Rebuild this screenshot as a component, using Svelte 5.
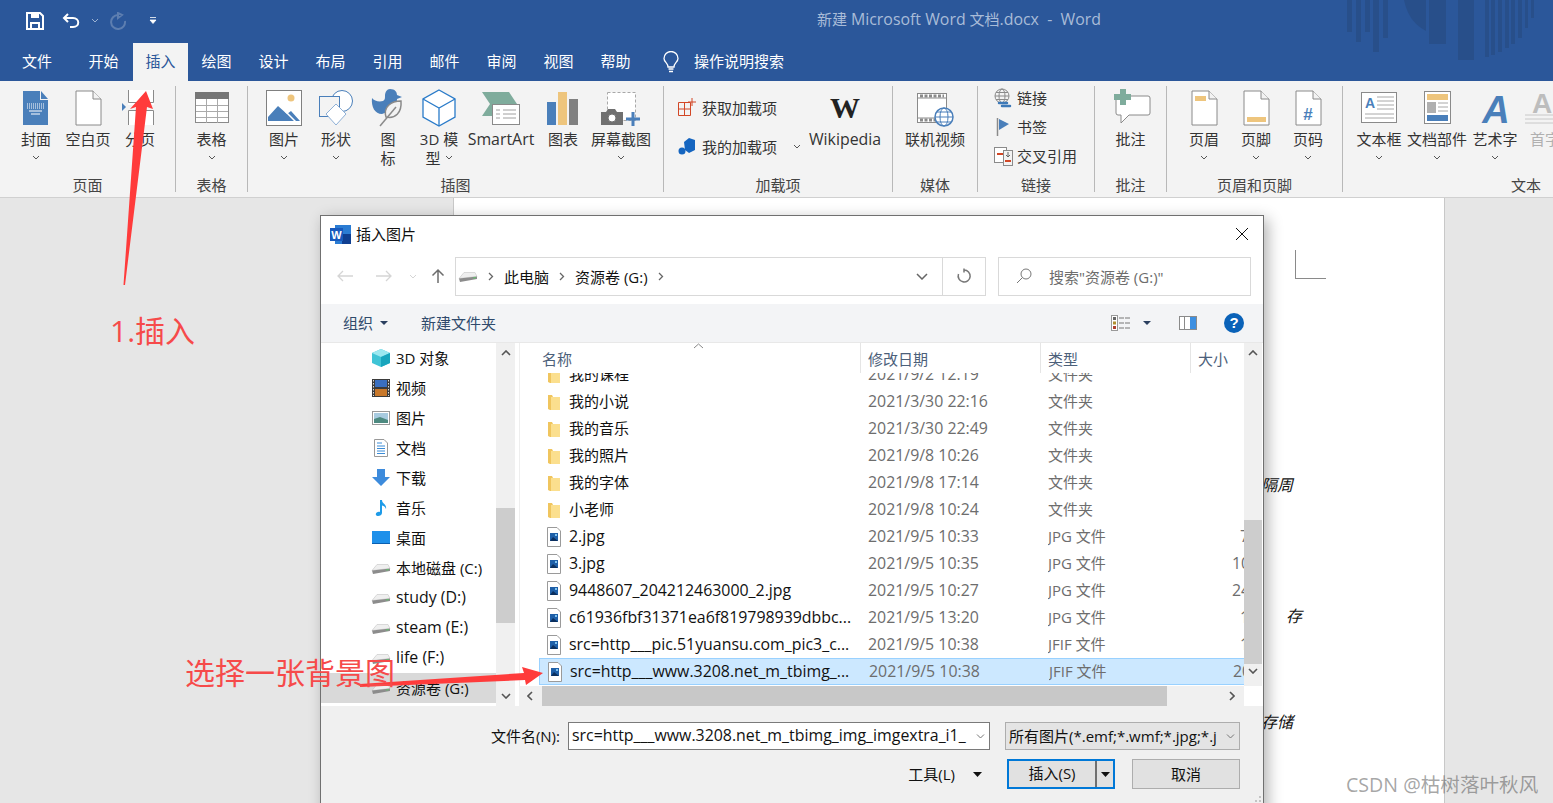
<script>
  const tabs = ['绘图', '设计', '布局', '引用', '邮件', '审阅', '视图', '帮助'];

  const tree = [
    { icon: 'cube', label: '3D 对象' },
    { icon: 'film', label: '视频' },
    { icon: 'pic', label: '图片' },
    { icon: 'txt', label: '文档' },
    { icon: 'down', label: '下载' },
    { icon: 'note', label: '音乐' },
    { icon: 'desk', label: '桌面' },
    { icon: 'drive', label: '本地磁盘 (C:)' },
    { icon: 'drive', label: 'study (D:)' },
    { icon: 'drive', label: 'steam (E:)' },
    { icon: 'drive', label: 'life (F:)' },
    { icon: 'drive', label: '资源卷 (G:)', selected: true }
  ];

  const files = [
    { name: '我的课程', date: '2021/9/2 12:19', type: '文件夹', folder: true },
    { name: '我的小说', date: '2021/3/30 22:16', type: '文件夹', folder: true },
    { name: '我的音乐', date: '2021/3/30 22:49', type: '文件夹', folder: true },
    { name: '我的照片', date: '2021/9/8 10:26', type: '文件夹', folder: true },
    { name: '我的字体', date: '2021/9/8 17:14', type: '文件夹', folder: true },
    { name: '小老师', date: '2021/9/8 10:24', type: '文件夹', folder: true },
    { name: '2.jpg', date: '2021/9/5 10:33', type: 'JPG 文件', size: '7', narrow: true },
    { name: '3.jpg', date: '2021/9/5 10:35', type: 'JPG 文件', size: '10' },
    { name: '9448607_204212463000_2.jpg', date: '2021/9/5 10:27', type: 'JPG 文件', size: '24' },
    { name: 'c61936fbf31371ea6f819798939dbbc...', date: '2021/9/5 13:20', type: 'JPG 文件', size: '1', narrow: true },
    { name: 'src=http___pic.51yuansu.com_pic3_c...', date: '2021/9/5 10:38', type: 'JFIF 文件', size: '1', narrow: true },
    { name: 'src=http___www.3208.net_m_tbimg_...', date: '2021/9/5 10:38', type: 'JFIF 文件', size: '20', selected: true }
  ];

  const stripes = [
    [314, 5, 32], [323, 5, 42], [332, 5, 32], [340, 6, 52], [350, 5, 38],
    [396, 17, 44], [425, 16, 60], [452, 4, 57], [458, 4, 55], [465, 4, 52],
    [472, 4, 48], [478, 4, 44], [485, 4, 38], [492, 3, 28], [498, 3, 18]
  ];

  // latin runs look a bit larger than the cjk ones in the reference
  const isLatin = (text) => /^[\x00-\x7f]+$/.test(text);
</script>

{#snippet chev()}
  <svg class="chev" width="8" height="5" viewBox="0 0 8 5"><path d="M1 1l3 3 3-3" fill="none" stroke="#555" /></svg>
{/snippet}

{#snippet pageDoc()}
  <path d="M10 3H27L35 11V37H10Z" fill="#fff" stroke="#8a8a8a" />
  <path d="M27 3V11H35" fill="#f3f3f3" stroke="#8a8a8a" />
{/snippet}

{#snippet ribbonIcon(name)}
  <svg width="44" height="40" viewBox="0 0 44 40">
    {#if name === 'cover'}
      <path d="M9 3H26V12H34V37H9Z" fill="#4a7fba" />
      <path d="M27 3L34 11H27Z" fill="#4a7fba" />
      <path d="M13 16H30M13 18H30M13 20H30" stroke="#fff" stroke-dasharray="1 1" />
      <path d="M15 23H28M17 26H26" stroke="#fff" />
    {:else if name === 'blank' || name === 'header' || name === 'footer' || name === 'pageno'}
      {@render pageDoc()}
      {#if name === 'header'}
        <rect x="13" y="8" width="11" height="5" fill="#eec57d" />
      {:else if name === 'footer'}
        <rect x="13" y="29" width="19" height="5" fill="#eec57d" />
      {:else if name === 'pageno'}
        <text x="22" y="32" text-anchor="middle" class="hash">#</text>
      {/if}
    {:else if name === 'break'}
      <rect x="10" y="2" width="26" height="15" fill="#fff" />
      <rect x="10" y="22" width="26" height="15" fill="#fff" />
      <path d="M10.500 2V14.500H35.500V2M10.500 37V22.500H35.500V37" fill="none" stroke="#8a8a8a" />
      <path d="M4 15l4 4-4 4Z" fill="#4a7fba" />
    {:else if name === 'table'}
      <rect x="5.500" y="4.500" width="33" height="30" fill="#fff" stroke="#8a8a8a" />
      <rect x="5" y="4" width="34" height="7" fill="#767676" />
      <path d="M16.500 11V35M27.500 11V35M6 17.500H38M6 23.500H38M6 29.500H38" stroke="#aaa" />
    {:else if name === 'picture'}
      <rect x="4.500" y="2.500" width="35" height="35" fill="#fff" stroke="#808080" />
      <circle cx="29" cy="10" r="3.500" fill="#eec57d" />
      <path d="M6 33V29L16 18L25 26L29 23L38 33Z" fill="#4a7fba" />
      <path d="M23 23L34 34" stroke="#fff" stroke-width="1.500" />
    {:else if name === 'shapes'}
      <circle cx="28" cy="13" r="10.500" fill="#fff" stroke="#4a7fba" />
      <rect x="5.500" y="8.500" width="20" height="20" fill="#f3f3f3" stroke="#4a7fba" />
      <path d="M22 16L32 26L22 37L12 26Z" fill="#fff" stroke="#8fb0d6" />
    {:else if name === 'icons'}
      <path d="M24 1c5 0 7 3 7 6l5 2-5 2c0 5-2 9-7 12l-8 3c-7 0-11-7-10-16 2 3 7 4 11 3 2-1 2-3 2-5 0-4 2-7 5-7Z" fill="#4a7fba" />
      <path d="M35 13C25 13 17 19 20 29 29 31 36 25 35 13Z" fill="#f3f3f3" stroke="#8a8a8a" stroke-width="1.500" />
      <path d="M14 38L30 19" stroke="#8a8a8a" stroke-width="1.500" />
    {:else if name === 'model'}
      <path d="M22 2L38 11V29L22 38L6 29V11Z" fill="#fff" stroke="#2a7bc9" stroke-width="1.300" />
      <path d="M6 11L22 20L38 11M22 20V38" fill="none" stroke="#2a7bc9" stroke-width="1.300" />
    {:else if name === 'smartart'}
      <path d="M3 4H30L38 16L30 28H3L11 16Z" fill="#7fac9c" />
      <rect x="13.500" y="16.500" width="27" height="20" fill="#fff" stroke="#8a8a8a" />
      <path d="M24 22H37M24 26H37M24 30H37M17 22H21M17 26H21M17 30H21" stroke="#a0a0a0" />
    {:else if name === 'chart'}
      <rect x="6" y="14" width="9" height="23" fill="#4a7fba" />
      <rect x="17" y="4" width="9" height="33" fill="#eec57d" />
      <rect x="28" y="11" width="9" height="26" fill="#808080" />
    {:else if name === 'shot'}
      <rect x="8.500" y="4.500" width="28" height="28" fill="#fff" stroke="#a8a8a8" stroke-dasharray="3 2" />
      <path d="M2 24H7L9 21H16L18 24H24V37H2Z" fill="#707070" />
      <circle cx="13" cy="30" r="4" fill="#fff" stroke="#707070" />
      <path d="M34 24V38M27 31H41" stroke="#4a7fba" stroke-width="3" />
    {:else if name === 'wiki'}
      <text x="22" y="30" text-anchor="middle" class="wiki">W</text>
    {:else if name === 'video'}
      <rect x="4.500" y="5.500" width="29" height="29" fill="#fff" stroke="#8a8a8a" />
      <path d="M5 10H33M5 30H33" stroke="#8a8a8a" />
      <path d="M7 8H31M7 32H25" stroke="#8a8a8a" stroke-width="3" stroke-dasharray="3 1.500" />
      <circle cx="31" cy="29" r="9" fill="#fff" stroke="#4a7fba" stroke-width="1.500" />
      <ellipse cx="31" cy="29" rx="4" ry="9" fill="none" stroke="#4a7fba" />
      <path d="M22 29H40M24 24H38M24 34H38" stroke="#4a7fba" />
    {:else if name === 'comment'}
      <path d="M9 8H39a2 2 0 0 1 2 2V25a2 2 0 0 1-2 2H20L12 35V27H9a2 2 0 0 1-2-2V10a2 2 0 0 1 2-2Z" fill="#fff" stroke="#8a8a8a" />
      <path d="M14 1V17M5 9H22" stroke="#7fac9c" stroke-width="6" />
    {:else if name === 'textbox'}
      <rect x="4.500" y="4.500" width="35" height="30" fill="#fff" stroke="#8a8a8a" />
      <text x="13" y="20" text-anchor="middle" class="boxa">A</text>
      <path d="M20 9H37M20 13H37M20 17H37M20 21H37M8 26H37M8 30H37" stroke="#a8a8a8" />
    {:else if name === 'parts'}
      <rect x="9.500" y="3.500" width="26" height="32" fill="#fff" stroke="#8a8a8a" />
      <rect x="12" y="6" width="21" height="6" fill="#eec57d" />
      <rect x="12" y="14" width="9" height="11" fill="#b0b0b0" />
      <path d="M23 15H33M23 19H33M23 23H33" stroke="#a8a8a8" />
      <rect x="12" y="27" width="21" height="6" fill="#4a7fba" />
    {:else if name === 'wordart'}
      <text x="23" y="35" text-anchor="middle" class="art">A</text>
    {:else if name === 'dropcap'}
      <text x="9" y="25" class="cap">A</text>
      <path d="M2 27H30M2 31H30M2 35H30" stroke="#c8c8c8" />
    {/if}
  </svg>
{/snippet}

{#snippet bigBtn(icon, width, first, second, more, off)}
  <div class="big" class:off style="width:{width}px">
    {@render ribbonIcon(icon)}
    <span class="lbl" class:lat={isLatin(first)}>{first}</span>
    <span class="lbl two">{second}{#if more}{@render chev()}{/if}</span>
  </div>
{/snippet}

{#snippet treeIcon(name)}
  <svg width="20" height="20" viewBox="0 0 20 20">
    {#if name === 'cube'}
      <path d="M10 1L19 5V15L10 19L1 15V5Z" fill="#3fc4d6" />
      <path d="M1 5L10 9L19 5L10 1Z" fill="#9ce8f0" />
      <path d="M10 9V19L19 15V5Z" fill="#18a5bd" />
    {:else if name === 'film'}
      <rect x="1" y="1" width="18" height="18" fill="#3b3b3b" />
      <rect x="4" y="2" width="12" height="7" fill="#3a6fc0" />
      <rect x="4" y="11" width="12" height="7" fill="#c8782a" />
      <path d="M2.500 2V18M17.500 2V18" stroke="#ddd" stroke-dasharray="1.500 1.500" />
    {:else if name === 'pic'}
      <rect x="1.500" y="3.500" width="17" height="13" fill="#fff" stroke="#999" />
      <rect x="3" y="5" width="14" height="10" fill="#a8cbe0" />
      <path d="M3 15V11L9 9L17 12V15Z" fill="#4d8a80" />
    {:else if name === 'txt'}
      <path d="M3.500 1.500H13L16.500 5V18.500H3.500Z" fill="#fff" stroke="#999" />
      <path d="M6 5H11M6 8H14M6 10.500H14M6 13H14M6 15.500H14" stroke="#3a8cd8" />
    {:else if name === 'down'}
      <path d="M6 1H14V9H19L10 18L1 9H6Z" fill="#3d8bdc" />
    {:else if name === 'note'}
      <path d="M9 2H11C11 6 16 6 15 11C14 8 12 7.500 11 7.500V15C11 18 6 19 5 17C4 15 7 13 9 14Z" fill="#1e9be8" />
    {:else if name === 'desk'}
      <rect x="1" y="3" width="18" height="13" fill="#1e90ea" />
      <path d="M1 15.500H19" stroke="#0a5fb0" />
    {:else}
      <path d="M1 12.500L6 6.500H17L19 10.500Z" fill="#efefef" stroke="#c4c4c4" stroke-width=".6" />
      <path d="M1 12.500L19 10.500V13L2 16Z" fill="#8c8c8c" />
      <path d="M15 12L18 11.600" stroke="#5fc46a" />
    {/if}
  </svg>
{/snippet}

<div class="word">
  <header class="titlebar">
    <svg class="stripes" width="520" height="60" viewBox="0 0 520 60">
      {#each stripes as [x, w, h]}
        <rect {x} y="0" width={w} height={h} />
      {/each}
      <path d="M371 0C374 14 380 24 393 31V0Z" />
    </svg>
    <div class="qat">
      <svg width="18" height="18" viewBox="0 0 18 18"><path d="M1 1H14L17 4V17H1Z" fill="none" stroke="#fff" stroke-width="2" /><rect x="5" y="1" width="8" height="5" fill="#fff" /><path d="M5 17V11H13V17" fill="none" stroke="#fff" stroke-width="2" /></svg>
      <svg class="undo" width="18" height="16" viewBox="0 0 18 16"><path d="M6 1L2 5L6 9M2 5H11C18 5 18 14 11 14H8" fill="none" stroke="#fff" stroke-width="2" /></svg>
      <svg class="tiny" width="8" height="5" viewBox="0 0 8 5"><path d="M1 1l3 3 3-3" fill="none" stroke="#9db3d3" /></svg>
      <svg class="redo" width="18" height="18" viewBox="0 0 18 18"><path d="M9 3A7 7 0 1 0 16 9M9 1V6L13 3Z" fill="none" stroke="#5d7eb0" stroke-width="2" /></svg>
      <svg class="custom" width="8" height="7" viewBox="0 0 8 7"><path d="M1 .5H7M1 3H7L4 6.500Z" fill="#fff" stroke="#fff" stroke-width=".8" /></svg>
    </div>
    <div class="doc-title">新建 <span class="lat">Microsoft Word</span> 文档<span class="lat">.docx&nbsp; - &nbsp;Word</span></div>
  </header>

  <nav class="tabs">
    <span class="tab file">文件</span>
    <span class="tab home">开始</span>
    <span class="tab active">插入</span>
    {#each tabs as tab}
      <span class="tab">{tab}</span>
    {/each}
    <svg class="bulb" width="18" height="22" viewBox="0 0 18 22"><path d="M6 16C6 12 2 11 2 7.500A7 7 0 0 1 16 7.500C16 11 12 12 12 16Z" fill="none" stroke="#fff" stroke-width="1.300" /><path d="M6.500 18H11.500M7 20.500H11" stroke="#fff" stroke-width="1.300" /></svg>
    <span class="tell">操作说明搜索</span>
  </nav>

  <section class="ribbon">
    <div class="group" style="width:176px">
      <div class="body" style="padding-left:10px">
        {@render bigBtn('cover', 52, '封面', '', true)}
        {@render bigBtn('blank', 52, '空白页', '', false)}
        {@render bigBtn('break', 52, '分页', '', false)}
      </div>
      <div class="gname">页面</div>
    </div>
    <div class="group" style="width:72px">
      <div class="body">{@render bigBtn('table', 71, '表格', '', true)}</div>
      <div class="gname">表格</div>
    </div>
    <div class="group" style="width:416px">
      <div class="body" style="padding-left:10px">
        {@render bigBtn('picture', 52, '图片', '', true)}
        {@render bigBtn('shapes', 52, '形状', '', true)}
        {@render bigBtn('icons', 52, '图', '标', false)}
        {@render bigBtn('model', 50, '3D 模', '型', true)}
        {@render bigBtn('smartart', 74, 'SmartArt', '', false)}
        {@render bigBtn('chart', 50, '图表', '', false)}
        {@render bigBtn('shot', 66, '屏幕截图', '', true)}
      </div>
      <div class="gname">插图</div>
    </div>
    <div class="group" style="width:229px">
      <div class="body" style="padding-left:14px">
        <div class="addins">
          <div class="addin">
            <svg width="18" height="18" viewBox="0 0 18 18"><path d="M.500 4.500H12.500V17.500H.500ZM.500 11H12.500M6.500 4.500V17.500" fill="none" stroke="#d24726" /><path d="M14 0V8M10 4H18" stroke="#d24726" /></svg>
            <span>获取加载项</span>
          </div>
          <div class="addin">
            <svg width="18" height="18" viewBox="0 0 18 18"><path d="M6 5L11 1L17 3V13L11 16L7 13Z" fill="#1565c0" /><circle cx="4" cy="14" r="3.500" fill="#1565c0" /></svg>
            <span>我的加载项</span>
            {@render chev()}
          </div>
        </div>
        {@render bigBtn('wiki', 72, 'Wikipedia', '', false)}
      </div>
      <div class="gname">加载项</div>
    </div>
    <div class="group" style="width:85px">
      <div class="body">{@render bigBtn('video', 84, '联机视频', '', false)}</div>
      <div class="gname">媒体</div>
    </div>
    <div class="group" style="width:117px">
      <div class="links">
        <div class="link">
          <svg width="20" height="20" viewBox="0 0 20 20"><circle cx="9" cy="8" r="7" fill="none" stroke="#8a8a8a" /><ellipse cx="9" cy="8" rx="3" ry="7" fill="none" stroke="#8a8a8a" /><path d="M2 8H16M3 4.500H15M3 11.500H15" stroke="#8a8a8a" /><path d="M6 15H14M9 18H17" stroke="#3d79b8" stroke-width="2.500" stroke-linecap="round" /></svg>
          <span>链接</span>
        </div>
        <div class="link">
          <svg width="20" height="20" viewBox="0 0 20 20"><path d="M4.500 1V19" stroke="#8a8a8a" stroke-width="1.500" /><path d="M6 2L16 7L6 13Z" fill="#4a7fba" /></svg>
          <span>书签</span>
        </div>
        <div class="link">
          <svg width="20" height="20" viewBox="0 0 20 20"><rect x="1.500" y="1.500" width="12" height="15" fill="#fff" stroke="#8a8a8a" /><path d="M4 8H11" stroke="#d24726" stroke-width="2" /><rect x="10.500" y="4.500" width="9" height="15" fill="#f3f3f3" stroke="#8a8a8a" /><path d="M15 6V11M13 9L15 11L17 9" fill="none" stroke="#666" /><path d="M12 15H18" stroke="#d24726" stroke-width="2" /></svg>
          <span>交叉引用</span>
        </div>
      </div>
      <div class="gname">链接</div>
    </div>
    <div class="group" style="width:72px">
      <div class="body">{@render bigBtn('comment', 71, '批注', '', false)}</div>
      <div class="gname">批注</div>
    </div>
    <div class="group" style="width:176px">
      <div class="body" style="padding-left:11px">
        {@render bigBtn('header', 52, '页眉', '', true)}
        {@render bigBtn('footer', 52, '页脚', '', true)}
        {@render bigBtn('pageno', 52, '页码', '', true)}
      </div>
      <div class="gname">页眉和页脚</div>
    </div>
    <div class="group last" style="width:366px">
      <div class="body" style="padding-left:7px">
        {@render bigBtn('textbox', 58, '文本框', '', true)}
        {@render bigBtn('parts', 58, '文档部件', '', true)}
        {@render bigBtn('wordart', 58, '艺术字', '', true)}
        {@render bigBtn('dropcap', 42, '首字', '', false, true)}
      </div>
      <div class="gname">文本</div>
    </div>
  </section>

  <main class="canvas">
    <div class="sheet">
      <div class="crop"></div>
      <span class="hand h1">隔周</span>
      <span class="hand h2">存</span>
      <span class="hand h3">存储</span>
    </div>
  </main>

  <div class="dialog">
    <div class="dlg-title">
      <svg width="21" height="19" viewBox="0 0 21 19"><rect x="5" y="0" width="16" height="19" fill="#2b7cd3" /><rect x="12" y="9" width="9" height="10" fill="#103f91" /><rect x="0" y="3" width="13" height="13" fill="#185abd" /><text x="6.500" y="13.500" text-anchor="middle" class="wordw">W</text></svg>
      <span class="up">插入图片</span>
      <svg class="close" width="14" height="14" viewBox="0 0 14 14"><path d="M1 1L13 13M13 1L1 13" stroke="#111" /></svg>
    </div>

    <div class="dlg-nav">
      <svg class="nav-a" width="18" height="14" viewBox="0 0 18 14"><path d="M17 7H2M7 2L2 7L7 12" fill="none" stroke="#d5d5d5" stroke-width="1.300" /></svg>
      <svg class="nav-b" width="18" height="14" viewBox="0 0 18 14"><path d="M1 7H16M11 2L16 7L11 12" fill="none" stroke="#d5d5d5" stroke-width="1.300" /></svg>
      <svg class="nav-c" width="8" height="5" viewBox="0 0 8 5"><path d="M1 1l3 3 3-3" fill="none" stroke="#d5d5d5" /></svg>
      <svg class="nav-d" width="14" height="16" viewBox="0 0 14 16"><path d="M7 15V2M1.500 7.500L7 2L12.500 7.500" fill="none" stroke="#6d6d6d" stroke-width="1.500" /></svg>
      <div class="address">
        <span class="crumb-icon">{@render treeIcon('drive')}</span>
        <svg class="crumb-sep" width="6" height="9" viewBox="0 0 6 9"><path d="M1 1l3.500 3.500L1 8" fill="none" stroke="#666" stroke-width="1.300" /></svg>
        <span>此电脑</span>
        <svg class="crumb-sep" width="6" height="9" viewBox="0 0 6 9"><path d="M1 1l3.500 3.500L1 8" fill="none" stroke="#666" stroke-width="1.300" /></svg>
        <span>资源卷 (G:)</span>
        <svg class="crumb-sep" width="6" height="9" viewBox="0 0 6 9"><path d="M1 1l3.500 3.500L1 8" fill="none" stroke="#666" stroke-width="1.300" /></svg>
        <svg class="addr-drop" width="12" height="7" viewBox="0 0 12 7"><path d="M1 1l5 5 5-5" fill="none" stroke="#666" stroke-width="1.500" /></svg>
        <div class="refresh">
          <svg width="16" height="16" viewBox="0 0 16 16"><path d="M8 2A6 6 0 1 1 2.500 6M8 .500V4.500" fill="none" stroke="#777" stroke-width="1.500" /></svg>
        </div>
      </div>
      <div class="search">
        <svg width="16" height="16" viewBox="0 0 16 16"><circle cx="10" cy="6" r="5" fill="none" stroke="#777" /><path d="M6.500 9.500L1 15" stroke="#777" /></svg>
        <span>搜索"资源卷 (G:)"</span>
      </div>
    </div>

    <div class="dlg-tools">
      <span class="tool org up">组织</span>
      <svg class="caret" width="8" height="4" viewBox="0 0 8 4"><path d="M0 0H8L4 4Z" fill="#2a3f5f" /></svg>
      <span class="tool mkdir up">新建文件夹</span>
      <svg class="view" width="20" height="16" viewBox="0 0 20 16"><rect x=".500" y=".500" width="6" height="15" fill="#fff" stroke="#999" /><rect x="2" y="2" width="3" height="3" fill="#666" /><rect x="2" y="6.500" width="3" height="3" fill="#b09030" /><rect x="2" y="11" width="3" height="3" fill="#b04030" /><path d="M8 3H19M8 8H19M8 13H19" stroke="#777" stroke-dasharray="5 1" /></svg>
      <svg class="caret vcaret" width="8" height="4" viewBox="0 0 8 4"><path d="M0 0H8L4 4Z" fill="#2a3f5f" /></svg>
      <svg class="pane" width="18" height="14" viewBox="0 0 18 14"><rect x=".500" y=".500" width="17" height="13" fill="#fff" stroke="#8a8a8a" /><rect x="11" y="1" width="6" height="12" fill="#3d8fe0" /><path d="M5.500 1V13" stroke="#8a8a8a" /></svg>
      <span class="help">?</span>
    </div>

    <div class="dlg-main">
      <aside class="tree">
        <div class="tree-rows">
          {#each tree as item}
            <div class="tree-row" class:sel={item.selected}>
              {@render treeIcon(item.icon)}
              <span class="up" class:lat={isLatin(item.label)}>{item.label}</span>
            </div>
          {/each}
        </div>
        <div class="vbar tree-bar">
          <svg width="10" height="6" viewBox="0 0 10 6"><path d="M1 5l4-4 4 4" fill="none" stroke="#555" stroke-width="1.600" /></svg>
          <div class="thumb"></div>
          <svg width="10" height="6" viewBox="0 0 10 6"><path d="M1 1l4 4 4-4" fill="none" stroke="#555" stroke-width="1.600" /></svg>
        </div>
      </aside>

      <div class="listing">
        <div class="list-area">
          <div class="col-heads">
            <span class="col c-name">名称<svg class="sort" width="11" height="6" viewBox="0 0 11 6"><path d="M1 5l4.500-4L10 5" fill="none" stroke="#888" /></svg></span>
            <span class="col c-date">修改日期</span>
            <span class="col c-type">类型</span>
            <span class="col c-size">大小</span>
          </div>
          <div class="rows">
            {#each files as file}
              <div class="row" class:sel={file.selected}>
                <span class="fname">
                  {#if file.folder}
                    <svg width="14" height="16" viewBox="0 0 14 16"><path d="M1 1H5L6 3H13V16H3L1 15Z" fill="#f0c55e" /><path d="M4 3H13V16H4Z" fill="#fbdf8e" /></svg>
                  {:else}
                    <svg width="14" height="20" viewBox="0 0 14 20"><path d="M.500 .500H10L13.500 4V19.500H.500Z" fill="#fff" stroke="#9a9a9a" /><rect x="3" y="6" width="8" height="8" fill="#1e5fa8" /><path d="M3 14L6 10L11 14Z" fill="#0b2f5e" /><rect x="8" y="7" width="2" height="2" fill="#7fc4f0" /></svg>
                  {/if}
                  <span class:lat={isLatin(file.name)}>{file.name}</span>
                </span>
                <span class="fdate lat">{file.date}</span>
                <span class="fdate">{file.type}</span>
                <span class="fdate lat" class:narrow={file.narrow}>{file.size ?? ''}</span>
              </div>
            {/each}
          </div>
        </div>
        <div class="vbar list-bar">
          <svg width="10" height="6" viewBox="0 0 10 6"><path d="M1 5l4-4 4 4" fill="none" stroke="#555" stroke-width="1.600" /></svg>
          <div class="thumb"></div>
          <svg width="10" height="6" viewBox="0 0 10 6"><path d="M1 1l4 4 4-4" fill="none" stroke="#555" stroke-width="1.600" /></svg>
        </div>
        <div class="hbar">
          <svg width="6" height="10" viewBox="0 0 6 10"><path d="M5 1L1 5l4 4" fill="none" stroke="#555" stroke-width="1.600" /></svg>
          <div class="hthumb"></div>
          <svg width="6" height="10" viewBox="0 0 6 10"><path d="M1 1l4 4-4 4" fill="none" stroke="#555" stroke-width="1.600" /></svg>
        </div>
      </div>
    </div>

    <div class="dlg-foot">
      <div class="foot-row">
        <span class="fn-label up">文件名(N):</span>
        <div class="combo">
          <span class="lat up">src=http___www.3208.net_m_tbimg_img_imgextra_i1_</span>
          <svg width="9" height="5" viewBox="0 0 9 5"><path d="M1 .5l3.500 3.500L8 .5" fill="none" stroke="#777" /></svg>
        </div>
        <div class="filter">
          <span class="up">所有图片(*.emf;*.wmf;*.jpg;*.j</span>
          <svg width="9" height="5" viewBox="0 0 9 5"><path d="M1 .5l3.500 3.500L8 .5" fill="none" stroke="#777" /></svg>
        </div>
      </div>
      <div class="foot-row actions">
        <span class="tools-btn up">工具(L)</span>
        <svg class="tools-caret" width="9" height="5" viewBox="0 0 9 5"><path d="M0 0H9L4.500 5Z" fill="#111" /></svg>
        <div class="btn primary">
          <span class="btn-main">插入(S)</span>
          <span class="btn-split"><svg width="9" height="5" viewBox="0 0 9 5"><path d="M0 0H9L4.500 5Z" fill="#111" /></svg></span>
        </div>
        <div class="btn cancel"><span class="up">取消</span></div>
      </div>
      <svg class="grip" width="12" height="8" viewBox="0 0 12 8"><path d="M9 1H11V3H9ZM5 5H7V7H5ZM9 5H11V7H9Z" fill="#c4c4c4" /></svg>
    </div>
  </div>

  <!-- hand drawn notes on top of the screenshot -->
  <svg class="marks" width="1553" height="803" viewBox="0 0 1553 803">
    <path d="M146 91L153 109L147 107L125 285L123.500 285L136 107L130 109Z" fill="#ff3b3b" />
    <path d="M360 684L524 673L522 667L543 673L526 685L525 680L360 687Z" fill="#ff3b3b" />
  </svg>
  <span class="note n1">1.插入</span>
  <span class="note n2">选择一张背景图</span>
  <span class="mark">CSDN @枯树落叶秋风</span>
</div>

<style>
  :global(body) {
    margin: 0;
  }

  .word {
    position: relative;
    width: 1553px;
    height: 803px;
    overflow: hidden;
    display: flex;
    flex-direction: column;
    background: #e6e6e6;
    color: #333;
    font-family: "Open Sans", "Noto Sans CJK SC", sans-serif;
    font-size: 15px;
  }

  svg {
    flex: none;
    display: block;
  }

  .lat {
    font-size: 15.9px;
  }

  .up {
    position: relative;
    top: -1px;
  }

  .titlebar {
    position: relative;
    height: 41px;
    flex: none;
    background: #2b579a;
  }

  .stripes {
    position: absolute;
    top: 0;
    right: 0;
    fill: #284f8a;
  }

  .qat {
    display: flex;
    align-items: center;
    height: 41px;
    padding-left: 26px;
  }

  .undo {
    margin-left: 18px;
  }

  .tiny {
    margin-left: 11px;
  }

  .redo {
    margin-left: 10px;
  }

  .custom {
    margin-left: 22px;
  }

  .doc-title {
    position: absolute;
    top: 9px;
    left: 0;
    right: 0;
    padding-left: 365px;
    text-align: center;
    color: #a9bcd8;
    line-height: 20px;
  }

  .tabs {
    display: flex;
    align-items: flex-end;
    height: 40px;
    flex: none;
    background: #2b579a;
    color: #fff;
  }

  .tab {
    width: 57px;
    height: 38px;
    line-height: 36px;
    text-align: center;
  }

  .file {
    width: 58px;
    margin-left: 8px;
  }

  .home {
    margin-left: 9px;
  }

  .active {
    width: 55px;
    margin-left: 1px;
    background: #f3f3f3;
    color: #2b579a;
  }

  .bulb {
    margin: 0 0 8px 18px;
  }

  .tell {
    margin-left: 14px;
    height: 38px;
    line-height: 36px;
  }

  .ribbon {
    display: flex;
    height: 117px;
    flex: none;
    overflow: hidden;
    padding-top: 5px;
    box-sizing: border-box;
    background: #f3f3f3;
    border-bottom: 1px solid #d0d0d0;
  }

  .group {
    flex: none;
    display: flex;
    flex-direction: column;
    height: 106px;
    box-sizing: border-box;
    border-right: 1px solid #b8b8b8;
  }

  .group.last {
    border-right: 0;
  }

  .body {
    display: flex;
    flex: 1;
    padding-top: 2px;
  }

  .gname {
    text-align: center;
    line-height: 14px;
    color: #444;
  }

  .big {
    flex: none;
    display: flex;
    flex-direction: column;
    align-items: center;
  }

  .off {
    color: #b0b0b0;
  }

  .lbl {
    display: flex;
    align-items: center;
    gap: 4px;
    height: 18px;
    margin-top: 2px;
    line-height: 18px;
    white-space: nowrap;
  }

  .lbl.two {
    height: 19px;
    margin-top: 0;
  }

  .chev {
    margin: 0 auto;
  }

  .hash {
    font: bold 17px "Liberation Sans", sans-serif;
    fill: #4a7fba;
  }

  .wiki {
    font: 700 30px "Liberation Serif", serif;
    fill: #222;
  }

  .wordw {
    font: bold 11px "Liberation Sans", sans-serif;
    fill: #fff;
  }

  .boxa {
    font: bold 14px "Liberation Sans", sans-serif;
    fill: #4a7fba;
  }

  .art {
    font: italic bold 38px "Liberation Sans", sans-serif;
    fill: #4a7fba;
  }

  .cap {
    font: bold 28px "Liberation Sans", sans-serif;
    fill: #bdbdbd;
  }

  .addins {
    width: 131px;
    display: flex;
    flex-direction: column;
    gap: 21px;
    padding-top: 10px;
  }

  .addin {
    display: flex;
    align-items: center;
    gap: 6px;
    height: 18px;
    white-space: nowrap;
  }

  .addin .chev {
    margin: 0 0 0 10px;
  }

  .links {
    flex: 1;
    padding-left: 15px;
    margin-top: -3px;
  }

  .link {
    display: flex;
    align-items: center;
    gap: 4px;
    height: 29px;
  }

  .canvas {
    flex: 1;
    display: flex;
    padding-left: 453px;
    min-height: 0;
  }

  .sheet {
    position: relative;
    width: 992px;
    box-sizing: border-box;
    background: #fff;
    border: solid #c8c8c8;
    border-width: 0 1px;
  }

  .crop {
    position: absolute;
    left: 841px;
    top: 52px;
    width: 30px;
    height: 28px;
    border: solid #8a8a8a;
    border-width: 0 0 1px 1px;
  }

  .hand {
    position: absolute;
    color: #111;
    font-style: italic;
    font-size: 16px;
    line-height: 20px;
    white-space: nowrap;
  }

  .h1 {
    left: 807px;
    top: 277px;
  }

  .h2 {
    left: 832px;
    top: 408px;
  }

  .h3 {
    left: 807px;
    top: 514px;
  }

  .dialog {
    position: absolute;
    left: 320px;
    top: 215px;
    width: 944px;
    height: 600px;
    box-sizing: border-box;
    display: flex;
    flex-direction: column;
    background: #fff;
    border: 1px solid #707070;
    box-shadow: 4px 4px 14px rgba(0, 0, 0, 0.3);
    color: #111;
  }

  .dlg-title {
    display: flex;
    align-items: center;
    gap: 5px;
    height: 36px;
    flex: none;
    padding-left: 9px;
  }

  .close {
    margin-left: auto;
    margin-right: 14px;
  }

  .dlg-nav {
    display: flex;
    align-items: center;
    height: 52px;
    flex: none;
    padding-bottom: 4px;
    box-sizing: border-box;
  }

  .nav-a {
    margin-left: 15px;
  }

  .nav-b {
    margin-left: 21px;
  }

  .nav-c {
    margin-left: 16px;
  }

  .nav-d {
    margin-left: 14px;
  }

  .address {
    display: flex;
    align-items: center;
    width: 531px;
    height: 39px;
    box-sizing: border-box;
    margin-left: 10px;
    padding-left: 2px;
    border: 1px solid #d9d9d9;
  }

  .crumb-sep {
    margin: 0 10px;
  }

  .addr-drop {
    margin-left: auto;
    margin-right: 14px;
  }

  .refresh {
    display: flex;
    align-items: center;
    justify-content: center;
    width: 42px;
    height: 100%;
    border-left: 1px solid #d9d9d9;
  }

  .search {
    display: flex;
    align-items: center;
    gap: 17px;
    width: 253px;
    height: 39px;
    box-sizing: border-box;
    margin-left: 12px;
    padding-left: 17px;
    border: 1px solid #d9d9d9;
    color: #6d6d6d;
  }

  .dlg-tools {
    display: flex;
    align-items: center;
    height: 39px;
    flex: none;
    background: #f3f4f6;
    border-bottom: 1px solid #e8e8e8;
    box-sizing: border-box;
    color: #2f4a6b;
  }

  .org {
    margin-left: 22px;
  }

  .caret {
    margin-left: 7px;
  }

  .mkdir {
    margin-left: 33px;
  }

  .view {
    margin-left: auto;
  }

  .vcaret {
    margin-left: 12px;
  }

  .pane {
    margin-left: 28px;
  }

  .help {
    width: 20px;
    height: 20px;
    margin: 0 19px 0 27px;
    border-radius: 50%;
    background: #0a62b8;
    color: #fff;
    font: bold 15px/20px "Liberation Sans", sans-serif;
    text-align: center;
  }

  .dlg-main {
    display: flex;
    height: 363px;
    flex: none;
  }

  .tree {
    display: flex;
    width: 194px;
    flex: none;
  }

  .tree-rows {
    width: 175px;
    flex: none;
  }

  .tree-row {
    display: flex;
    align-items: center;
    height: 30px;
    padding-left: 50px;
    gap: 5px;
    white-space: nowrap;
  }

  .tree-row.sel {
    background: #d9d9d9;
  }

  .vbar {
    display: flex;
    flex-direction: column;
    align-items: center;
    justify-content: space-between;
    box-sizing: border-box;
    background: #f0f0f0;
  }

  .tree-bar {
    position: relative;
    width: 19px;
    padding: 7px 0;
  }

  .tree-bar .thumb {
    position: absolute;
    left: 0;
    right: 0;
    top: 165px;
    height: 115px;
    background: #cdcdcd;
  }

  .listing {
    position: relative;
    flex: 1;
    display: grid;
    grid-template-columns: 1fr 18px;
    grid-template-rows: 343px 20px;
    margin: 0 1px 0 4px;
    min-width: 0;
  }

  .list-area {
    min-width: 0;
    overflow: hidden;
    display: flex;
    flex-direction: column;
    border-left: 1px solid #eee;
  }

  .col-heads {
    display: flex;
    height: 30px;
    flex: none;
    color: #4c607a;
    line-height: 32px;
    background: #fff;
  }

  .col {
    position: relative;
    box-sizing: border-box;
    padding-left: 7px;
    border-left: 1px solid #e5e5e5;
    flex: none;
  }

  .c-name {
    width: 340px;
    padding-left: 22px;
    border-left: 0;
  }

  .sort {
    position: absolute;
    top: 0;
    left: 173px;
  }

  .c-date {
    width: 180px;
  }

  .c-type {
    width: 150px;
  }

  .c-size {
    width: 60px;
  }

  .rows {
    flex: 1;
    overflow: hidden;
    padding-left: 19px;
  }

  .row {
    display: grid;
    grid-template-columns: 329px 180px 184px 1fr;
    height: 27px;
    box-sizing: border-box;
    line-height: 27px;
    white-space: nowrap;
  }

  .row:first-child {
    margin-top: -12px;
  }

  .row.sel {
    background: #cce8ff;
    border: solid #99d1ff;
    border-width: 1px 0 1px 1px;
    line-height: 25px;
  }

  .fname {
    display: flex;
    align-items: center;
    gap: 8px;
    padding-left: 8px;
  }

  .fdate {
    color: #6d6d6d;
    overflow: hidden;
  }

  .fdate.narrow {
    padding-left: 8px;
  }

  .list-bar {
    position: relative;
    padding: 7px 0;
  }

  .list-bar .thumb {
    position: absolute;
    left: 0;
    right: 0;
    top: 177px;
    height: 144px;
    background: #cdcdcd;
  }

  .list-bar svg:last-child {
    margin-bottom: 5px;
  }

  .hbar {
    display: flex;
    align-items: center;
    justify-content: space-between;
    padding: 0 9px 0 8px;
    background: #f0f0f0;
    position: relative;
  }

  .hthumb {
    position: absolute;
    top: 0;
    bottom: 0;
    left: 23px;
    width: 625px;
    background: #c8c8c8;
  }

  .dlg-foot {
    position: relative;
    flex: 1;
    background: #f0f0f0;
    padding-top: 16px;
    padding-right: 23px;
  }

  .foot-row {
    display: flex;
    align-items: center;
    justify-content: flex-end;
  }

  .fn-label {
    margin-right: 8px;
  }

  .combo,
  .filter {
    display: flex;
    align-items: center;
    justify-content: space-between;
    height: 28px;
    box-sizing: border-box;
    padding: 0 4px 0 3px;
    white-space: nowrap;
  }

  .combo {
    width: 422px;
    background: #fff;
    border: 1px solid #7a7a7a;
  }

  .filter {
    width: 235px;
    margin-left: 15px;
    background: #e4e4e4;
    border: 1px solid #adadad;
  }

  .actions {
    margin-top: 9px;
    height: 30px;
  }

  .tools-caret {
    margin: 0 25px 0 18px;
  }

  .btn {
    display: flex;
    align-items: center;
    justify-content: center;
    height: 30px;
    box-sizing: border-box;
    background: #e1e1e1;
  }

  .primary {
    width: 108px;
    border: 2px solid #0078d7;
  }

  .btn-main {
    flex: 1;
    text-align: center;
    border-right: 2px solid #707070;
    line-height: 24px;
    height: 26px;
  }

  .btn-split {
    display: flex;
    justify-content: center;
    width: 16px;
  }

  .cancel {
    width: 108px;
    margin-left: 17px;
    border: 1px solid #adadad;
  }

  .grip {
    position: absolute;
    top: 89px;
    right: 1px;
  }

  .marks {
    position: absolute;
    top: 0;
    left: 0;
    pointer-events: none;
  }

  .note {
    position: absolute;
    color: #f64a4a;
    font-size: 30px;
    line-height: 36px;
    white-space: nowrap;
  }

  .n1 {
    left: 110px;
    top: 313px;
  }

  .n2 {
    left: 185px;
    top: 655px;
  }

  .mark {
    position: absolute;
    left: 1346px;
    top: 772px;
    color: rgba(90, 90, 90, 0.55);
    font-size: 19.6px;
    line-height: 26px;
    white-space: nowrap;
  }
</style>
